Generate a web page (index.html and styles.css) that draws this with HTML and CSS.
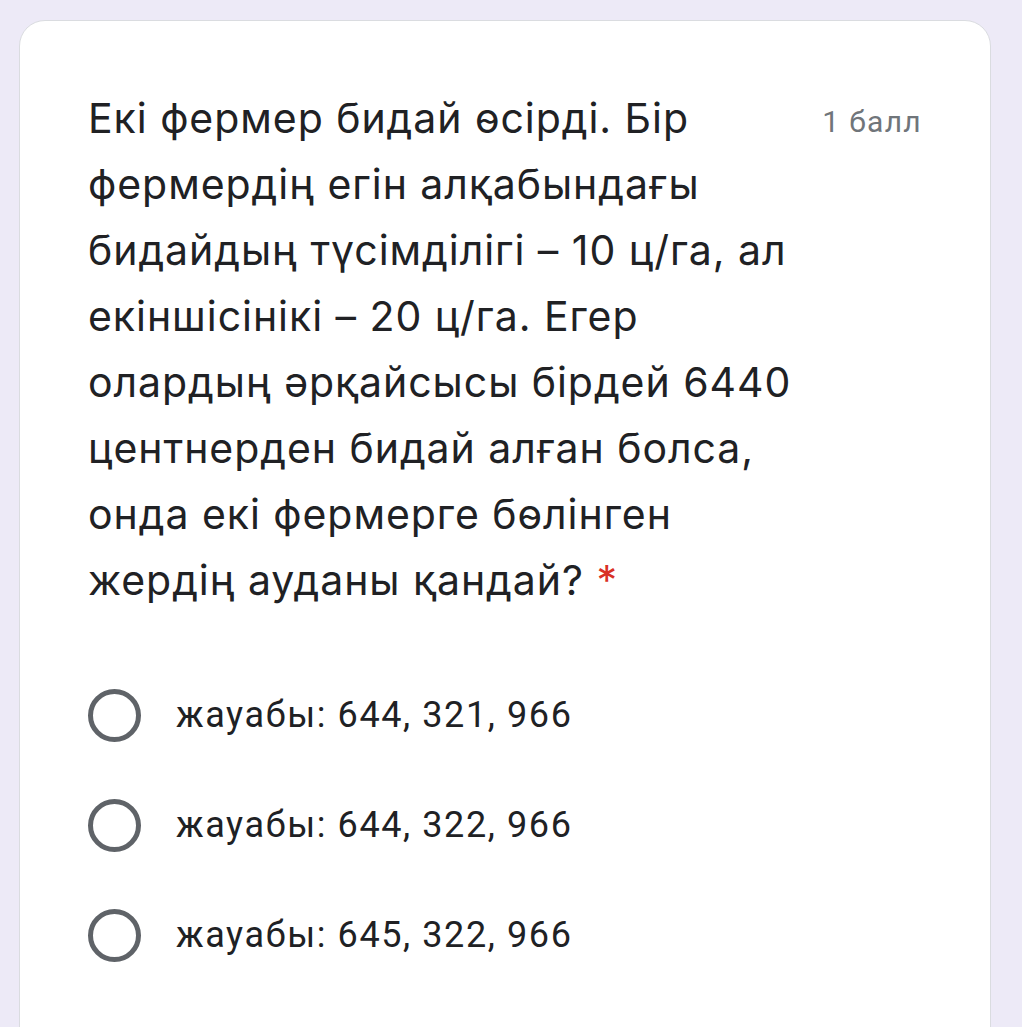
FILE: index.html
```html
<!DOCTYPE html>
<html lang="kk">
<head>
<meta charset="UTF-8">
<meta name="viewport" content="width=device-width, initial-scale=1.0">
<title>Сұрақ</title>
<link rel="stylesheet" href="styles.css">
</head>
<body>
<div class="card">
    <div class="question-head">
        <div class="question-title">
            Екі фермер бидай өсірді. Бір<br>
            фермердің егін алқабындағы<br>
            бидайдың түсімділігі – 10 ц/га, ал<br>
            екіншісінікі – 20 ц/га. Егер<br>
            олардың әрқайсысы бірдей 6440<br>
            центнерден бидай алған болса,<br>
            онда екі фермерге бөлінген<br>
            жердің ауданы қандай? <span class="required">*</span>
        </div>
        <div class="points">1 балл</div>
    </div>

    <div class="options">
        <label class="option">
            <span class="radio"></span>
            <span class="option-text">жауабы: 644, 321, 966</span>
        </label>
        <label class="option">
            <span class="radio"></span>
            <span class="option-text">жауабы: 644, 322, 966</span>
        </label>
        <label class="option">
            <span class="radio"></span>
            <span class="option-text">жауабы: 645, 322, 966</span>
        </label>
    </div>
</div>
</body>
</html>
```

FILE: styles.css
```css
body {
    margin: 0;
    background-color: #edeaf7;
    font-family: Roboto, "Noto Sans", sans-serif;
    color: #202124;
}

.card {
    margin: 20px 31px 0 19px;
    background-color: #fff;
    border: 1px solid #dadce0;
    border-radius: 26px;
    padding: 64px 68px 120px 68px;
}

.question-head {
    display: flex;
    justify-content: space-between;
    align-items: flex-start;
}

.question-title {
    font-family: Inter, Roboto, sans-serif;
    font-size: 41px;
    line-height: 66px;
    letter-spacing: 0.95px;
    white-space: nowrap;
}

.required {
    color: #d93025;
}

.points {
    font-size: 30px;
    line-height: 66px;
    letter-spacing: 1.3px;
    color: #70757a;
    margin-top: 4px;
}

.options {
    margin-top: 47px;
    display: flex;
    flex-direction: column;
}

.option {
    display: flex;
    align-items: center;
    height: 110px;
}

.radio {
    width: 43px;
    height: 43px;
    border: 5px solid #5f6368;
    border-radius: 50%;
    flex-shrink: 0;
}

.option-text {
    margin-left: 35px;
    font-size: 36px;
    letter-spacing: 1.6px;
}
```
